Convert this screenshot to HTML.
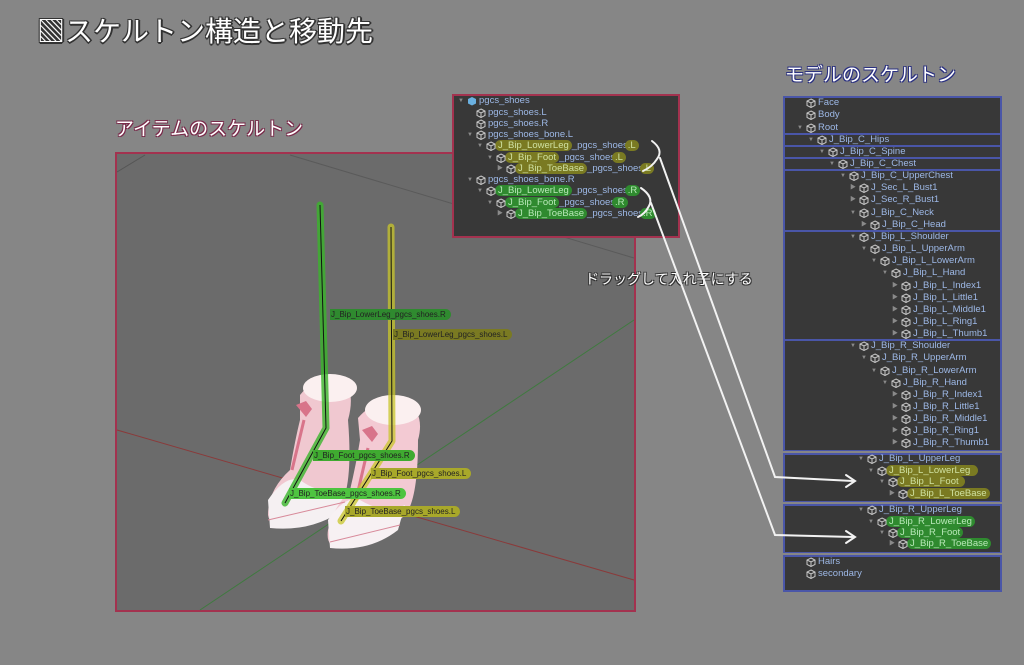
<!DOCTYPE html>
<html><head><meta charset="utf-8">
<style>
*{margin:0;padding:0;box-sizing:border-box}
body{width:1024px;height:665px;background:#868686;position:relative;overflow:hidden;font-family:"Liberation Sans","Noto Sans CJK JP",sans-serif}
.t{position:absolute;white-space:nowrap}
.title{left:37px;top:10px;font-size:28px;color:#fff;font-family:"Noto Sans CJK JP",sans-serif;text-shadow:-1px -1px 0 #333,1px -1px 0 #333,-1px 1px 0 #333,1px 1px 0 #333,0 2px 0 #333,2px 0 0 #333}
.sub1{left:115px;top:114px;font-size:19px;color:#fff;font-family:"Noto Sans CJK JP",sans-serif;text-shadow:-1px -1px 0 #7a2a4a,1px -1px 0 #7a2a4a,-1px 1px 0 #7a2a4a,1px 1px 0 #7a2a4a}
.sub2{left:785px;top:60px;font-size:19px;color:#fff;font-family:"Noto Sans CJK JP",sans-serif;text-shadow:-1px -1px 0 #2a3080,1px -1px 0 #2a3080,-1px 1px 0 #2a3080,1px 1px 0 #2a3080}
.drag{left:585px;top:269px;font-size:14px;color:#fff;font-family:"Noto Sans CJK JP",sans-serif;text-shadow:-1px -1px 0 #333,1px -1px 0 #333,-1px 1px 0 #333,1px 1px 0 #333}
.panel{position:absolute;background:#383838}
.r{position:absolute;height:12px;font-size:9.5px;line-height:12px;color:#9db8e6;white-space:nowrap}
.r svg{position:absolute;left:-12px;top:1px;width:10px;height:10px}
.r i{position:absolute;left:-21px;top:0;font-style:normal;font-size:6px;color:#8a8a8a}
.y{background:#7a7a22;border-radius:6px;padding:0 3px;margin-left:-3px;color:#cfe0a0}
.g{background:#2f8a2f;border-radius:6px;padding:0 3px;margin-left:-3px;color:#b8e8b8}
.box{position:absolute;border:2px solid #4a56a8}
.lab{position:absolute;font-size:8px;line-height:11px;height:11px;color:#222;white-space:nowrap;border-radius:0 6px 6px 0;padding:0 5px 0 1px}
</style></head><body>
<svg width="0" height="0" style="position:absolute"><defs><g id="c"><path d="M5 1 L9 3 L9 7.5 L5 9.5 L1 7.5 L1 3 Z M1 3 L5 5 L9 3 M5 5 L5 9.5" fill="none" stroke="#c8c8c8" stroke-width="1"/></g></defs></svg>

<div class="t title">▧スケルトン構造と移動先</div>
<div class="t sub1">アイテムのスケルトン</div>
<div class="t sub2">モデルのスケルトン</div>

<!-- viewport -->
<svg style="position:absolute;left:0;top:0" width="1024" height="665">
<rect x="116" y="153" width="519" height="458" fill="#6b6b6b" stroke="#a3324f" stroke-width="2"/>
<line x1="117" y1="430" x2="634" y2="580" stroke="#8a3a3a" stroke-width="1"/>
<line x1="200" y1="610" x2="634" y2="320" stroke="#3f7a3f" stroke-width="1"/>
<line x1="117" y1="172" x2="145" y2="155" stroke="#555" stroke-width="1"/>
<line x1="290" y1="155" x2="634" y2="258" stroke="#5a5a5a" stroke-width="1"/>
<g>
<path d="M300 395 Q318 372 345 378 Q355 395 348 420 Q352 470 345 495 Q330 515 300 525 Q270 530 268 515 Q268 490 290 470 Q295 440 300 420 Z" fill="#f0c8d0"/>
<path d="M268 500 Q285 475 300 480 Q320 495 345 490 L340 512 Q310 532 270 528 Z" fill="#f5f0f2"/>
<ellipse cx="330" cy="388" rx="27" ry="14" fill="#fbf0f0"/>
<path d="M358 418 Q378 395 408 402 Q425 415 418 440 Q418 500 405 515 Q380 540 345 548 Q325 550 328 530 Q332 510 350 490 Q356 465 360 440 Z" fill="#f3cad3"/>
<path d="M328 520 Q345 495 360 500 Q385 515 405 505 L398 530 Q370 552 330 548 Z" fill="#f7f1f3"/>
<ellipse cx="393" cy="410" rx="28" ry="15" fill="#fbf0f0"/>
<path d="M296 405 l10 -4 l6 8 l-6 8 z M362 430 l10 -4 l6 8 l-6 8 z" fill="#d8748a"/>
<path d="M304 420 L292 470 M368 448 L356 500" stroke="#d8748a" stroke-width="3"/>
<line x1="268" y1="520" x2="345" y2="502" stroke="#d88a9a" stroke-width="1"/>
<line x1="330" y1="542" x2="400" y2="525" stroke="#d88a9a" stroke-width="1"/>
</g>
<polyline points="320,205 326,428 285,503" fill="none" stroke="#39b52a" stroke-opacity=".8" stroke-width="7" stroke-linecap="round" stroke-linejoin="round"/>
<polyline points="391,227 392,441 341,521" fill="none" stroke="#c8c62a" stroke-opacity=".75" stroke-width="7" stroke-linecap="round" stroke-linejoin="round"/>
<polyline points="320,205 326,428 285,503" fill="none" stroke="#111" stroke-width="1"/>
<polyline points="391,227 392,441 341,521" fill="none" stroke="#111" stroke-width="1"/>
</svg>
<div class="lab" style="left:330px;top:309px;background:#2f8a2f">J_Bip_LowerLeg_pgcs_shoes.R</div>
<div class="lab" style="left:393px;top:329px;background:#7a7a22">J_Bip_LowerLeg_pgcs_shoes.L</div>
<div class="lab" style="left:313px;top:450px;background:#3faa30">J_Bip_Foot_pgcs_shoes.R</div>
<div class="lab" style="left:371px;top:468px;background:#a8a82a">J_Bip_Foot_pgcs_shoes.L</div>
<div class="lab" style="left:289px;top:488px;background:#4ec440">J_Bip_ToeBase_pgcs_shoes.R</div>
<div class="lab" style="left:345px;top:506px;background:#a8a82a">J_Bip_ToeBase_pgcs_shoes.L</div>
<div class="t drag">ドラッグして入れ子にする</div>

<!-- item hierarchy -->
<div class="panel" style="left:452px;top:94px;width:228px;height:144px;border:2px solid #a3324f"></div>
<div class="r" style="left:479px;top:95px"><i>▼</i><svg viewBox="0 0 10 10"><path d="M5 1 L9 3 L9 7.5 L5 9.5 L1 7.5 L1 3 Z" fill="#6ab0e0"/></svg>pgcs_shoes</div>
<div class="r" style="left:488px;top:107px"><svg viewBox="0 0 10 10"><use href="#c"/></svg>pgcs_shoes.L</div>
<div class="r" style="left:488px;top:118px"><svg viewBox="0 0 10 10"><use href="#c"/></svg>pgcs_shoes.R</div>
<div class="r" style="left:488px;top:129px"><i>▼</i><svg viewBox="0 0 10 10"><use href="#c"/></svg>pgcs_shoes_bone.L</div>
<div class="r" style="left:498px;top:140px"><i>▼</i><svg viewBox="0 0 10 10"><use href="#c"/></svg><span class="y">J_Bip_LowerLeg</span>_pgcs_shoes<span class="y">.L</span></div>
<div class="r" style="left:508px;top:152px"><i>▼</i><svg viewBox="0 0 10 10"><use href="#c"/></svg><span class="y">J_Bip_Foot</span>_pgcs_shoes<span class="y">.L</span></div>
<div class="r" style="left:518px;top:163px"><i>▶</i><svg viewBox="0 0 10 10"><use href="#c"/></svg><span class="y">J_Bip_ToeBase</span>_pgcs_shoes<span class="y">.L</span></div>
<div class="r" style="left:488px;top:174px"><i>▼</i><svg viewBox="0 0 10 10"><use href="#c"/></svg>pgcs_shoes_bone.R</div>
<div class="r" style="left:498px;top:185px"><i>▼</i><svg viewBox="0 0 10 10"><use href="#c"/></svg><span class="g">J_Bip_LowerLeg</span>_pgcs_shoes<span class="g">.R</span></div>
<div class="r" style="left:508px;top:197px"><i>▼</i><svg viewBox="0 0 10 10"><use href="#c"/></svg><span class="g">J_Bip_Foot</span>_pgcs_shoes<span class="g">.R</span></div>
<div class="r" style="left:518px;top:208px"><i>▶</i><svg viewBox="0 0 10 10"><use href="#c"/></svg><span class="g">J_Bip_ToeBase</span>_pgcs_shoes<span class="g">.R</span></div>

<!-- model hierarchy -->
<div class="panel" style="left:783px;top:96px;width:219px;height:496px"></div>
<div class="box" style="left:783px;top:96px;width:219px;height:39px"></div>
<div class="box" style="left:783px;top:133px;width:219px;height:14px"></div>
<div class="box" style="left:783px;top:145px;width:219px;height:14px"></div>
<div class="box" style="left:783px;top:157px;width:219px;height:14px"></div>
<div class="box" style="left:783px;top:169px;width:219px;height:63px"></div>
<div class="box" style="left:783px;top:230px;width:219px;height:111px"></div>
<div class="box" style="left:783px;top:339px;width:219px;height:113px"></div>
<div style="position:absolute;left:783px;top:451px;width:219px;height:3px;background:#868686"></div>
<div class="box" style="left:783px;top:453px;width:219px;height:50px"></div>
<div style="position:absolute;left:783px;top:502px;width:219px;height:2px;background:#868686"></div>
<div class="box" style="left:783px;top:504px;width:219px;height:50px"></div>
<div style="position:absolute;left:783px;top:553px;width:219px;height:2px;background:#868686"></div>
<div class="box" style="left:783px;top:555px;width:219px;height:37px"></div>

<div class="r" style="left:818px;top:97px"><svg viewBox="0 0 10 10"><use href="#c"/></svg>Face</div>
<div class="r" style="left:818px;top:109px"><svg viewBox="0 0 10 10"><use href="#c"/></svg>Body</div>
<div class="r" style="left:818px;top:122px"><i>▼</i><svg viewBox="0 0 10 10"><use href="#c"/></svg>Root</div>
<div class="r" style="left:829px;top:134px"><i>▼</i><svg viewBox="0 0 10 10"><use href="#c"/></svg>J_Bip_C_Hips</div>
<div class="r" style="left:840px;top:146px"><i>▼</i><svg viewBox="0 0 10 10"><use href="#c"/></svg>J_Bip_C_Spine</div>
<div class="r" style="left:850px;top:158px"><i>▼</i><svg viewBox="0 0 10 10"><use href="#c"/></svg>J_Bip_C_Chest</div>
<div class="r" style="left:861px;top:170px"><i>▼</i><svg viewBox="0 0 10 10"><use href="#c"/></svg>J_Bip_C_UpperChest</div>
<div class="r" style="left:871px;top:182px"><i>▶</i><svg viewBox="0 0 10 10"><use href="#c"/></svg>J_Sec_L_Bust1</div>
<div class="r" style="left:871px;top:194px"><i>▶</i><svg viewBox="0 0 10 10"><use href="#c"/></svg>J_Sec_R_Bust1</div>
<div class="r" style="left:871px;top:207px"><i>▼</i><svg viewBox="0 0 10 10"><use href="#c"/></svg>J_Bip_C_Neck</div>
<div class="r" style="left:882px;top:219px"><i>▶</i><svg viewBox="0 0 10 10"><use href="#c"/></svg>J_Bip_C_Head</div>
<div class="r" style="left:871px;top:231px"><i>▼</i><svg viewBox="0 0 10 10"><use href="#c"/></svg>J_Bip_L_Shoulder</div>
<div class="r" style="left:882px;top:243px"><i>▼</i><svg viewBox="0 0 10 10"><use href="#c"/></svg>J_Bip_L_UpperArm</div>
<div class="r" style="left:892px;top:255px"><i>▼</i><svg viewBox="0 0 10 10"><use href="#c"/></svg>J_Bip_L_LowerArm</div>
<div class="r" style="left:903px;top:267px"><i>▼</i><svg viewBox="0 0 10 10"><use href="#c"/></svg>J_Bip_L_Hand</div>
<div class="r" style="left:913px;top:280px"><i>▶</i><svg viewBox="0 0 10 10"><use href="#c"/></svg>J_Bip_L_Index1</div>
<div class="r" style="left:913px;top:292px"><i>▶</i><svg viewBox="0 0 10 10"><use href="#c"/></svg>J_Bip_L_Little1</div>
<div class="r" style="left:913px;top:304px"><i>▶</i><svg viewBox="0 0 10 10"><use href="#c"/></svg>J_Bip_L_Middle1</div>
<div class="r" style="left:913px;top:316px"><i>▶</i><svg viewBox="0 0 10 10"><use href="#c"/></svg>J_Bip_L_Ring1</div>
<div class="r" style="left:913px;top:328px"><i>▶</i><svg viewBox="0 0 10 10"><use href="#c"/></svg>J_Bip_L_Thumb1</div>
<div class="r" style="left:871px;top:340px"><i>▼</i><svg viewBox="0 0 10 10"><use href="#c"/></svg>J_Bip_R_Shoulder</div>
<div class="r" style="left:882px;top:352px"><i>▼</i><svg viewBox="0 0 10 10"><use href="#c"/></svg>J_Bip_R_UpperArm</div>
<div class="r" style="left:892px;top:365px"><i>▼</i><svg viewBox="0 0 10 10"><use href="#c"/></svg>J_Bip_R_LowerArm</div>
<div class="r" style="left:903px;top:377px"><i>▼</i><svg viewBox="0 0 10 10"><use href="#c"/></svg>J_Bip_R_Hand</div>
<div class="r" style="left:913px;top:389px"><i>▶</i><svg viewBox="0 0 10 10"><use href="#c"/></svg>J_Bip_R_Index1</div>
<div class="r" style="left:913px;top:401px"><i>▶</i><svg viewBox="0 0 10 10"><use href="#c"/></svg>J_Bip_R_Little1</div>
<div class="r" style="left:913px;top:413px"><i>▶</i><svg viewBox="0 0 10 10"><use href="#c"/></svg>J_Bip_R_Middle1</div>
<div class="r" style="left:913px;top:425px"><i>▶</i><svg viewBox="0 0 10 10"><use href="#c"/></svg>J_Bip_R_Ring1</div>
<div class="r" style="left:913px;top:437px"><i>▶</i><svg viewBox="0 0 10 10"><use href="#c"/></svg>J_Bip_R_Thumb1</div>
<div class="r" style="left:879px;top:453px"><i>▼</i><svg viewBox="0 0 10 10"><use href="#c"/></svg>J_Bip_L_UpperLeg</div>
<div class="r" style="left:889px;top:465px"><i>▼</i><svg viewBox="0 0 10 10"><use href="#c"/></svg><span class="y" style="padding-right:8px">J_Bip_L_LowerLeg</span></div>
<div class="r" style="left:900px;top:476px"><i>▼</i><svg viewBox="0 0 10 10"><use href="#c"/></svg><span class="y" style="padding-right:6px">J_Bip_L_Foot</span></div>
<div class="r" style="left:910px;top:488px"><i>▶</i><svg viewBox="0 0 10 10"><use href="#c"/></svg><span class="y">J_Bip_L_ToeBase</span></div>
<div class="r" style="left:879px;top:504px"><i>▼</i><svg viewBox="0 0 10 10"><use href="#c"/></svg>J_Bip_R_UpperLeg</div>
<div class="r" style="left:889px;top:516px"><i>▼</i><svg viewBox="0 0 10 10"><use href="#c"/></svg><span class="g">J_Bip_R_LowerLeg</span></div>
<div class="r" style="left:900px;top:527px"><i>▼</i><svg viewBox="0 0 10 10"><use href="#c"/></svg><span class="g">J_Bip_R_Foot</span></div>
<div class="r" style="left:910px;top:538px"><i>▶</i><svg viewBox="0 0 10 10"><use href="#c"/></svg><span class="g">J_Bip_R_ToeBase</span></div>
<div class="r" style="left:818px;top:556px"><svg viewBox="0 0 10 10"><use href="#c"/></svg>Hairs</div>
<div class="r" style="left:818px;top:568px"><svg viewBox="0 0 10 10"><use href="#c"/></svg>secondary</div>

<!-- arrows on top -->
<svg style="position:absolute;left:0;top:0" width="1024" height="665">
<g fill="none" stroke="#f2f2f2" stroke-width="2" stroke-linecap="round">
<path d="M652 141 Q664 150 657 159 Q652 167 643 171"/>
<path d="M641 188 Q654 197 649 206 Q645 214 638 217"/>
<path d="M660 158 L775 477 L853 481"/>
<path d="M846 475 L855 481 L846 487"/>
<path d="M651 203 L775 535 L853 537"/>
<path d="M846 531 L855 537 L846 543"/>
</g>
</svg>
</body></html>
